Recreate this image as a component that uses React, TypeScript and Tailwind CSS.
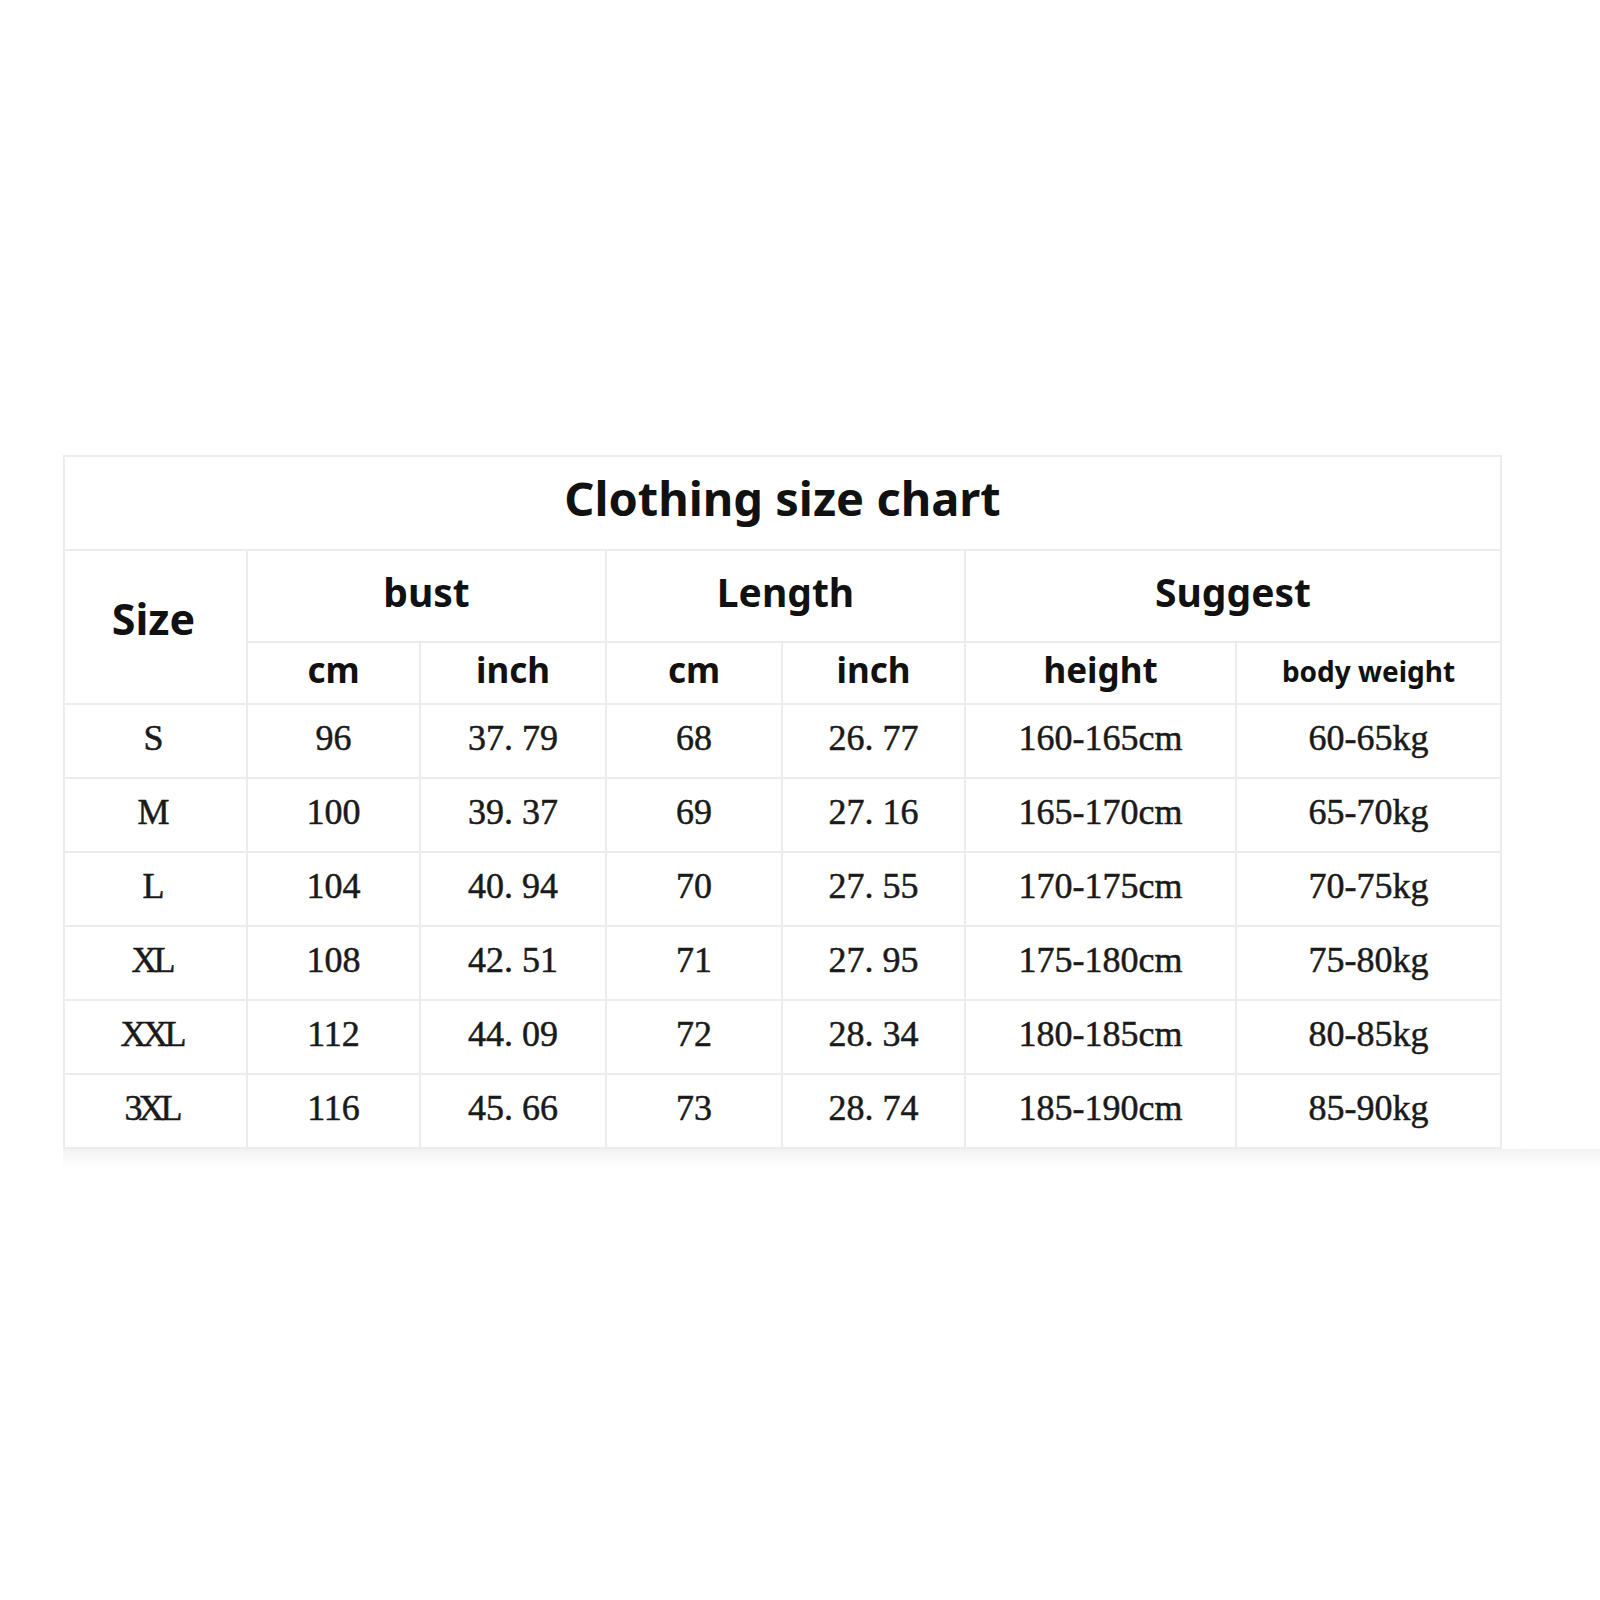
const rows = [
  ["S", "96", "37. 79", "68", "26. 77", "160-165cm", "60-65kg"],
  ["M", "100", "39. 37", "69", "27. 16", "165-170cm", "65-70kg"],
  ["L", "104", "40. 94", "70", "27. 55", "170-175cm", "70-75kg"],
  ["XL", "108", "42. 51", "71", "27. 95", "175-180cm", "75-80kg"],
  ["XXL", "112", "44. 09", "72", "28. 34", "180-185cm", "80-85kg"],
  ["3XL", "116", "45. 66", "73", "28. 74", "185-190cm", "85-90kg"],
];

const widths = [183, 173, 186, 176, 183, 271, 265];

const cell = "border-2 border-[#ececec] text-center align-middle p-0";
const head = `${cell} font-['Noto_Sans',sans-serif] font-bold text-[#111]`;
const data = `${cell} pb-[6px] font-['Liberation_Serif',serif] text-[36px] text-[#1a1a1a] [-webkit-text-stroke:0.5px_#1a1a1a]`;

export default function App() {
  return (
    <div className="min-h-[1600px] bg-white pt-[455px]">
      <table className="ml-[63px] w-[1437px] table-fixed border-collapse">
        <colgroup>
          {widths.map((w, i) => (
            <col key={i} style={{ width: w }} />
          ))}
        </colgroup>
        <tbody>
          <tr className="h-[94px]">
            <td colSpan={7} className={`${head} text-[47px] pb-[10px]`}>
              Clothing size chart
            </td>
          </tr>
          <tr className="h-[92px]">
            <td rowSpan={2} className={`${head} text-[43px] pb-[16px] pr-[4px]`}>
              Size
            </td>
            <td colSpan={2} className={`${head} text-[39px] pb-[8px]`}>
              bust
            </td>
            <td colSpan={2} className={`${head} text-[39px] pb-[8px]`}>
              Length
            </td>
            <td colSpan={2} className={`${head} text-[39px] pb-[8px]`}>
              Suggest
            </td>
          </tr>
          <tr className="h-[62px]">
            <td className={`${head} text-[35px] pb-[6px]`}>cm</td>
            <td className={`${head} text-[35px] pb-[6px]`}>inch</td>
            <td className={`${head} text-[35px] pb-[6px]`}>cm</td>
            <td className={`${head} text-[35px] pb-[6px]`}>inch</td>
            <td className={`${head} text-[35px] pb-[6px]`}>height</td>
            <td className={`${head} text-[28px] pb-[4px]`}>body weight</td>
          </tr>
          {rows.map((r) => (
            <tr key={r[0]} className="h-[74px]">
              {r.map((v, i) => (
                <td
                  key={i}
                  className={i === 0 ? `${data} tracking-[-4px] pr-[8px]` : data}
                >
                  {v}
                </td>
              ))}
            </tr>
          ))}
        </tbody>
      </table>
      <div className="ml-[63px] h-[20px] bg-gradient-to-b from-[#f2f2f4] to-white" />
    </div>
  );
}
